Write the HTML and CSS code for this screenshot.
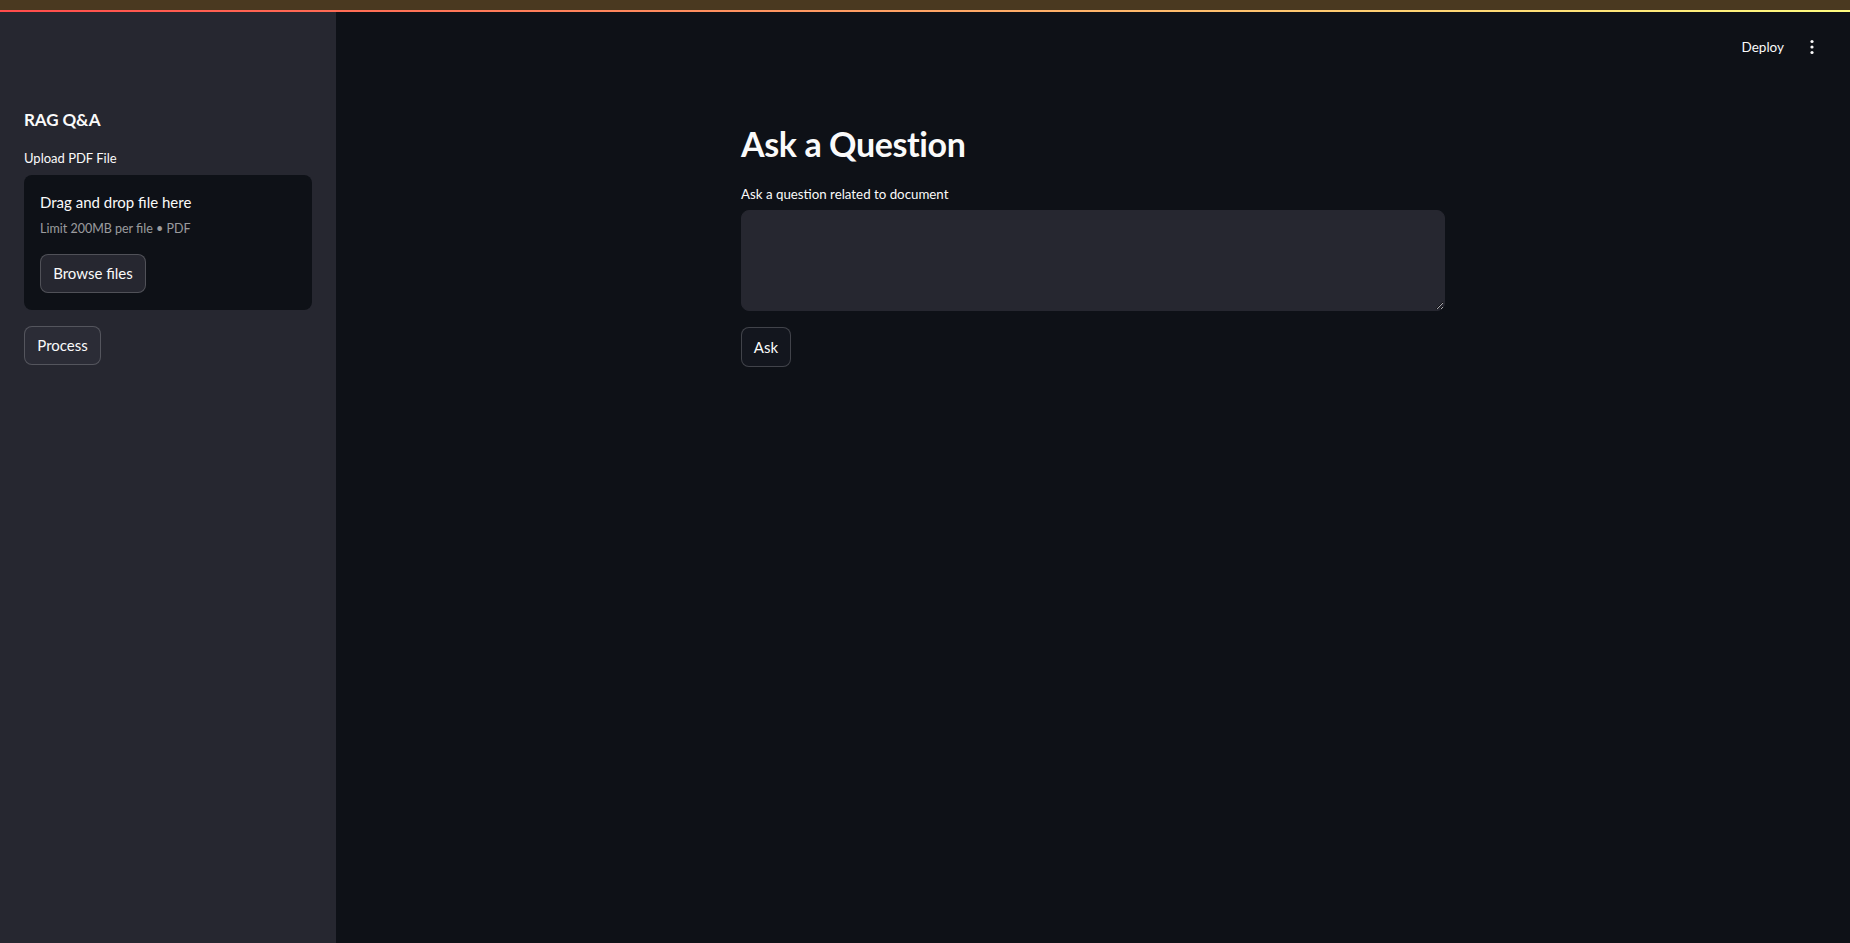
FILE: index.html
```html
<!DOCTYPE html>
<html lang="en">
<head>
<meta charset="utf-8">
<title>RAG Q&amp;A</title>
<link rel="stylesheet" href="styles.css">
</head>
<body>
<div class="decoration"><div class="deco-line"></div></div>
<div class="app">
  <aside class="sidebar">
    <h2 class="side-title">RAG Q&amp;A</h2>
    <div class="side-label">Upload PDF File</div>
    <div class="dropzone">
      <div class="dz-title">Drag and drop file here</div>
      <div class="dz-sub">Limit 200MB per file • PDF</div>
      <button class="btn btn-browse">Browse files</button>
    </div>
    <button class="btn btn-side">Process</button>
  </aside>
  <main class="main">
    <header class="topbar">
      <span class="deploy">Deploy</span>
      <svg class="kebab" width="16" height="16" viewBox="0 0 16 16"><circle cx="8" cy="2.5" r="1.6" fill="#fafafa"/><circle cx="8" cy="8" r="1.6" fill="#fafafa"/><circle cx="8" cy="13.5" r="1.6" fill="#fafafa"/></svg>
    </header>
    <section class="content">
      <h1 class="title">Ask a Question</h1>
      <label class="field-label">Ask a question related to document</label>
      <textarea class="question"></textarea>
      <button class="btn btn-main">Ask</button>
    </section>
  </main>
</div>
</body>
</html>
```
FILE: styles.css
```css
* { box-sizing: border-box; }
html, body { margin: 0; padding: 0; height: 100%; }
body {
  background: #0e1117;
  color: #fafafa;
  font-family: "Source Sans Pro", Lato, "Noto Sans", sans-serif;
  display: flex;
  flex-direction: column;
  overflow: hidden;
}
.decoration {
  height: 12px;
  min-height: 12px;
  background: #4a3920;
  display: flex;
  flex-direction: column;
  justify-content: flex-end;
  flex-shrink: 0;
}
.deco-line {
  height: 2px;
  background: linear-gradient(90deg, #ff4b4b, #fffd80);
}
.app {
  flex: 1;
  display: flex;
  min-height: 0;
}
.sidebar {
  width: 336px;
  flex-shrink: 0;
  background: #262730;
  padding: 97px 24px 0 24px;
  display: flex;
  flex-direction: column;
  align-items: flex-start;
}
.side-title {
  margin: 0;
  font-size: 17px;
  font-weight: 700;
  line-height: 21.6px;
  letter-spacing: -0.1px;
}
.side-label {
  margin-top: 17px;
  font-size: 13px;
  line-height: 20px;
}
.dropzone {
  margin-top: 7px;
  width: 288px;
  background: #0e1117;
  border-radius: 8px;
  padding: 17px 16px 17px 16px;
  display: flex;
  flex-direction: column;
  align-items: flex-start;
}
.dz-title { font-size: 15px; line-height: 20px; }
.dz-sub {
  margin-top: 8px;
  font-size: 12.5px;
  line-height: 18px;
  color: rgba(250, 250, 250, 0.6);
}
.btn {
  font-family: inherit;
  color: #fafafa;
  font-size: 15px;
  border: 1px solid rgba(250, 250, 250, 0.2);
  border-radius: 8px;
  padding: 0 11px;
  height: 39px;
  white-space: nowrap;
  cursor: pointer;
}
.btn-browse { margin-top: 16px; background: #262730; min-width: 106px; }
.btn-side { margin-top: 16px; background: #2b2c36; min-width: 77px; }
.btn-main { margin-top: 16px; background: #13161e; height: 40px; min-width: 50px; }
.main {
  flex: 1;
  display: flex;
  flex-direction: column;
  min-width: 0;
}
.topbar {
  height: 70px;
  display: flex;
  align-items: center;
  justify-content: flex-end;
  gap: 20px;
  padding-right: 30px;
  flex-shrink: 0;
}
.deploy { font-size: 13.5px; }
.content {
  width: 704px;
  margin: 40px auto 0 auto;
  display: flex;
  flex-direction: column;
  align-items: flex-start;
}
.title {
  margin: 0;
  font-size: 34px;
  font-weight: 700;
  line-height: 43px;
  letter-spacing: -0.4px;
}
.field-label {
  margin-top: 19px;
  font-size: 13.3px;
  line-height: 20px;
}
.question {
  margin-top: 6px;
  width: 704px;
  height: 101px;
  background: #262730;
  border: 1px solid #262730;
  border-radius: 8px;
  resize: vertical;
  color: #fafafa;
  font-family: inherit;
  font-size: 16px;
  padding: 8px 12px;
  outline: none;
}
```
